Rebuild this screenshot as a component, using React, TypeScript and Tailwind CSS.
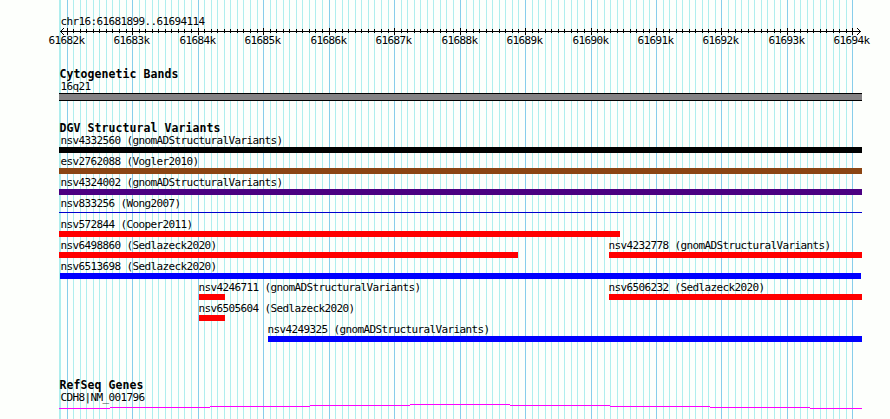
type Feature = { label: string; start: number; end: number; labelX: number; color: string; thin?: boolean };

const SCALE = 65.488;
const ORIGIN = 67.11;

const minorLines = Array.from({ length: 122 }, (_, i) => Math.floor(ORIGIN + ((i - 1) * SCALE) / 10));
const majorLines = Array.from({ length: 13 }, (_, i) => Math.floor(ORIGIN + i * SCALE));

const rows: Feature[][] = [
  [{ label: 'nsv4332560 (gnomADStructuralVariants)', start: 59, end: 862, labelX: 60.5, color: '#000000' }],
  [{ label: 'esv2762088 (Vogler2010)', start: 59, end: 862, labelX: 60.5, color: '#8b4513' }],
  [{ label: 'nsv4324002 (gnomADStructuralVariants)', start: 59, end: 862, labelX: 60.5, color: '#4b0082' }],
  [{ label: 'nsv833256 (Wong2007)', start: 59, end: 862, labelX: 60.5, color: '#0000cd', thin: true }],
  [{ label: 'nsv572844 (Cooper2011)', start: 59, end: 620, labelX: 60.5, color: '#ff0000' }],
  [
    { label: 'nsv6498860 (Sedlazeck2020)', start: 59, end: 518, labelX: 60.5, color: '#ff0000' },
    { label: 'nsv4232778 (gnomADStructuralVariants)', start: 609, end: 862, labelX: 608.5, color: '#ff0000' },
  ],
  [{ label: 'nsv6513698 (Sedlazeck2020)', start: 60, end: 861, labelX: 60.5, color: '#0000ff' }],
  [
    { label: 'nsv4246711 (gnomADStructuralVariants)', start: 199, end: 225, labelX: 198.5, color: '#ff0000' },
    { label: 'nsv6506232 (Sedlazeck2020)', start: 609, end: 862, labelX: 608.5, color: '#ff0000' },
  ],
  [{ label: 'nsv6505604 (Sedlazeck2020)', start: 199, end: 225, labelX: 198.5, color: '#ff0000' }],
  [{ label: 'nsv4249325 (gnomADStructuralVariants)', start: 268, end: 862, labelX: 267.5, color: '#0000ff' }],
];

const geneSteps: [number, number, number][] = [
  [59, 110, 408],
  [110, 210, 407],
  [210, 310, 406],
  [310, 410, 405],
  [410, 510, 404],
  [510, 610, 405],
  [610, 710, 406],
  [710, 810, 407],
  [810, 862, 408],
];

function Grid() {
  return (
    <svg className="absolute inset-0" width="890" height="419" shapeRendering="crispEdges">
      <rect x={59} y={0} width={1} height={419} fill="#afeeee" />
      {minorLines.map((x) => (
        <rect key={x} x={x} y={0} width={1} height={419} fill="#afeeee" />
      ))}
      {majorLines.map((x) => (
        <rect key={x} x={x} y={0} width={1} height={419} fill="#87ceeb" />
      ))}
    </svg>
  );
}

function Ruler() {
  return (
    <svg className="block h-[7px] w-[890px]" viewBox="0 28 890 7" shapeRendering="crispEdges">
      <rect x={60} y={31} width={801} height={1} />
      {minorLines.slice(1, -1).map((x) => (
        <rect key={x} x={x} y={29} width={1} height={4} />
      ))}
      {majorLines.map((x) => (
        <rect key={x} x={x} y={28} width={1} height={7} />
      ))}
      {[1, 2, 3].map((d) => (
        <g key={d}>
          <rect x={60 + d} y={31 - d} width={1} height={1} />
          <rect x={60 + d} y={31 + d} width={1} height={1} />
          <rect x={860 - d} y={31 - d} width={1} height={1} />
          <rect x={860 - d} y={31 + d} width={1} height={1} />
        </g>
      ))}
    </svg>
  );
}

function Heading({ children }: { children: string }) {
  return (
    <h2 className="ml-[59.5px] h-[13px] text-[11.5px] leading-[12px] font-bold tracking-[0.077px]">{children}</h2>
  );
}

function FeatureRow({ items }: { items: Feature[] }) {
  return (
    <div className="grid h-[21px] grid-cols-[890px] grid-rows-[12px_6px]">
      {items.map((f) => (
        <div key={f.label} className="contents">
          <span className="col-start-1 row-start-1" style={{ paddingLeft: f.labelX }}>
            {f.label}
          </span>
          <div
            className={`col-start-1 row-start-2 ${f.thin ? 'mt-[2px] h-px' : 'h-[6px]'}`}
            style={{ marginLeft: f.start, width: f.end - f.start, backgroundColor: f.color }}
          />
        </div>
      ))}
    </div>
  );
}

export default function App() {
  return (
    <div className="relative h-[419px] w-[890px] overflow-hidden bg-[#fdfffc]">
      <Grid />
      <div className="relative flex flex-col pt-[16px] font-['DejaVu_Sans_Mono',monospace] text-[11px] leading-[12px] tracking-[-0.622px] whitespace-pre text-black">
        <div className="h-[12px] pl-[60.5px]">chr16:61681899..61694114</div>
        <Ruler />
        <div className="flex h-[33px] pl-[48.5px]">
          {majorLines.map((x, i) => (
            <span key={x} className="shrink-0" style={{ width: (majorLines[i + 1] ?? x + 37) - x }}>
              {61682 + i}k
            </span>
          ))}
        </div>
        <Heading>Cytogenetic Bands</Heading>
        <div className="h-[12px] pl-[60.5px]">16q21</div>
        <div className="ml-[59px] h-[8px] w-[803px] border-y border-black bg-[#848284]" />
        <div className="h-[21px]" />
        <Heading>DGV Structural Variants</Heading>
        {rows.map((items) => (
          <FeatureRow key={items[0].label} items={items} />
        ))}
        <div className="h-[34px]" />
        <Heading>RefSeq Genes</Heading>
        <div className="h-[12px] pl-[60.5px]">CDH8|NM_001796</div>
        <svg className="block h-[15px] w-[890px]" viewBox="0 404 890 15" shapeRendering="crispEdges">
          {geneSteps.map(([x1, x2, y]) => (
            <rect key={x1} x={x1} y={y} width={x2 - x1} height={1} fill="#ff00ff" />
          ))}
        </svg>
      </div>
    </div>
  );
}
